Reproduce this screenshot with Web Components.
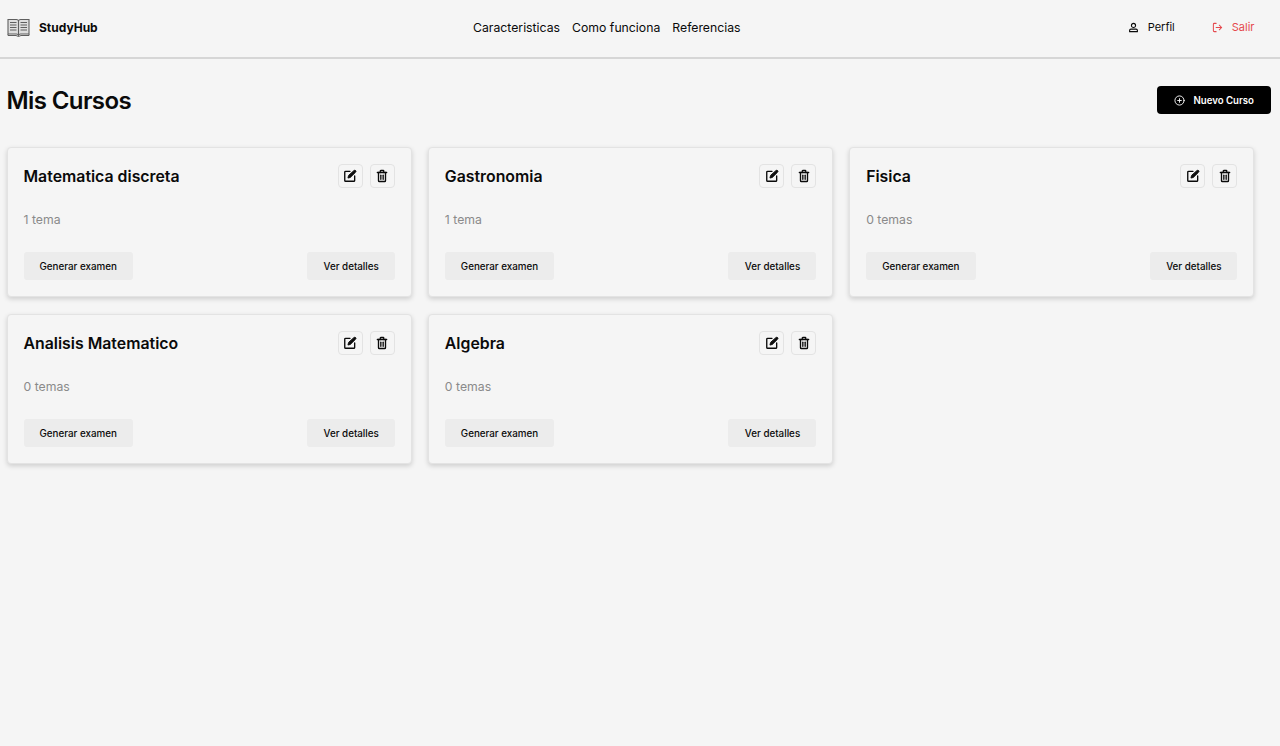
<!DOCTYPE html>
<html lang="es"><head><meta charset="utf-8"><title>StudyHub</title>
<style>
html,body{margin:0;background:#f5f5f5;font-family:Inter,"Liberation Sans",sans-serif;color:#0a0a0a}
body{min-height:100vh}
</style></head><body>
<app-header></app-header>
<main-view></main-view>
<template id="ic-edit"><svg width="14" height="14" viewBox="0 0 24 24" fill="none" stroke="currentColor" stroke-width="2.3" stroke-linecap="round" stroke-linejoin="round"><path d="M12 4H4.500A1.500 1.500 0 0 0 3 5.500v14A1.500 1.500 0 0 0 4.500 21h14a1.500 1.500 0 0 0 1.500-1.500V12"/><path d="M19 2.500a2 2 0 0 1 2.800 2.800L12.500 14.500l-4 1 1-4Z" fill="currentColor" stroke-width="1.600"/></svg></template>
<template id="ic-trash"><svg width="14" height="14" viewBox="0 0 24 24" fill="none" stroke="currentColor" stroke-width="2.3" stroke-linecap="round" stroke-linejoin="round"><path d="M4 6h16"/><path d="M18 6v14a1.500 1.500 0 0 1-1.500 1.500h-9A1.500 1.500 0 0 1 6 20V6"/><path d="M9 6V3.500A1 1 0 0 1 10 2.500h4a1 1 0 0 1 1 1V6"/><path d="M10 10.500v7"/><path d="M14 10.500v7"/></svg></template>
<script>
class AppHeader extends HTMLElement{
  constructor(){super();this.attachShadow({mode:'open'}).innerHTML=`
  <style>
  :host{display:block}
  header{height:54px;padding:0 25.500px 3px 6.500px;border-bottom:2px solid #d6d6d6;display:grid;grid-template-columns:466.500px auto 1fr;align-items:center}
  .brand{display:flex;align-items:center;gap:9.500px;font-weight:700;font-size:12px;color:#0a0a0a}
  nav{display:flex;gap:12px;font-size:12.250px;font-weight:400;color:#0a0a0a}
  .right{display:flex;justify-content:flex-end;gap:37px;font-size:11px}
  .right span{display:flex;align-items:center;gap:9px}
  .out{color:#e5484d}
  svg{display:block}
  </style>
  <header>
    <div class="brand">
      <svg width="23" height="19" viewBox="0 0 23 19" fill="none" stroke="#5f5f5f" stroke-width="1.1">
        <path d="M1 1.500h8.500c1 0 1.700.5 2 1.300.3-.8 1-1.300 2-1.300H22V16h-8.500c-1 0-1.700.5-2 1.300-.3-.8-1-1.300-2-1.300H1Z" fill="#dedede"/>
        <path d="M11.500 3v14"/>
        <path d="M3 4.500h6.500M3 7h6.500M3 9.500h6.500M3 12h6.500M13.500 4.500H20M13.500 7H20M13.500 9.500H20M13.500 12H20" stroke-width="1.200"/>
        <path d="M1 16v1.500h8l2.500 1 2.500-1h8V16" stroke-width="1"/>
      </svg>StudyHub</div>
    <nav><span>Caracteristicas</span><span>Como funciona</span><span>Referencias</span></nav>
    <div class="right">
      <span><svg width="11" height="11" viewBox="0 0 24 24" fill="none" stroke="#0a0a0a" stroke-width="2.400" stroke-linecap="round" stroke-linejoin="round"><circle cx="12" cy="7.500" r="4.500"/><path d="M3.500 21v-2.500a3 3 0 0 1 3-3h11a3 3 0 0 1 3 3V21Z"/></svg>Perfil</span>
      <span class="out"><svg width="11" height="11" viewBox="0 0 24 24" fill="none" stroke="#e5484d" stroke-width="2.200" stroke-linecap="round" stroke-linejoin="round"><path d="M9 21H5a2 2 0 0 1-2-2V5a2 2 0 0 1 2-2h4"/><path d="m16 17 5-5-5-5"/><path d="M21 12H9"/></svg>Salir</span>
    </div>
  </header>`}
}
class CourseCard extends HTMLElement{
  constructor(){super();const s=this.attachShadow({mode:'open'});
  s.innerHTML=`
  <style>
  :host{display:block;box-sizing:border-box;height:150px;background:#f5f5f5;border:1px solid #e3e3e3;border-radius:4px;box-shadow:0 2px 5px rgba(0,0,0,.16);padding:16px}
  .top{display:flex;justify-content:space-between;align-items:flex-start}
  h2{margin:1.500px 0 0;font-size:15.850px;line-height:22px;font-weight:600;color:#0a0a0a}
  .icons{display:flex;gap:7px}
  .ib{width:25px;height:24px;box-sizing:border-box;border:1px solid #e3e3e3;border-radius:4px;display:flex;align-items:center;justify-content:center;color:#0a0a0a}
  .ib svg{display:block}
  .count{margin-top:24px;font-size:12.250px;line-height:16px;color:#8a8a8a;height:16px}
  .acts{display:flex;justify-content:space-between;margin-top:24px}
  .btn{height:28px;padding:0 16px;background:#ececec;border-radius:3px;font-size:9.800px;font-weight:500;display:flex;align-items:center;color:#0a0a0a}
  .btn+.btn{padding-left:16.500px}
  </style>
  <div class="top"><h2><slot name="title"></slot></h2><div class="icons"><span class="ib" id="e"></span><span class="ib" id="t"></span></div></div>
  <div class="count"><slot name="count"></slot></div>
  <div class="acts"><span class="btn">Generar examen</span><span class="btn">Ver detalles</span></div>`;
  s.getElementById('e').append(document.getElementById('ic-edit').content.cloneNode(true));
  s.getElementById('t').append(document.getElementById('ic-trash').content.cloneNode(true));}
}
class MainView extends HTMLElement{
  constructor(){super();this.attachShadow({mode:'open'}).innerHTML=`
  <style>
  :host{display:block;padding:0 9.500px 24px 6.500px}
  .head{display:flex;justify-content:space-between;align-items:center;height:28px;margin-top:27px}
  h1{margin:0;font-size:24px;font-weight:600;letter-spacing:-.6px;line-height:29px;color:#0a0a0a}
  .new{height:28px;width:113.500px;box-sizing:border-box;background:#000;color:#fff;border-radius:4px;font-size:9.625px;font-weight:600;display:flex;align-items:center;justify-content:center;gap:9px}
  .grid{display:grid;grid-template-columns:repeat(3,405.33px);gap:17px 16px;margin-top:33px}
  </style>
  <div class="head"><h1>Mis Cursos</h1><div class="new"><svg width="11" height="11" viewBox="0 0 24 24" fill="none" stroke="#fff" stroke-width="2" stroke-linecap="round"><circle cx="12" cy="12" r="10"/><path d="M8 12h8M12 8v8"/></svg>Nuevo Curso</div></div>
  <div class="grid">
    <course-card><span slot="title">Matematica discreta</span><span slot="count">1 tema</span></course-card>
    <course-card><span slot="title">Gastronomia</span><span slot="count">1 tema</span></course-card>
    <course-card><span slot="title">Fisica</span><span slot="count">0 temas</span></course-card>
    <course-card><span slot="title">Analisis Matematico</span><span slot="count">0 temas</span></course-card>
    <course-card><span slot="title">Algebra</span><span slot="count">0 temas</span></course-card>
  </div>`}
}
customElements.define('course-card',CourseCard);
customElements.define('app-header',AppHeader);
customElements.define('main-view',MainView);
</script>
</body></html>
